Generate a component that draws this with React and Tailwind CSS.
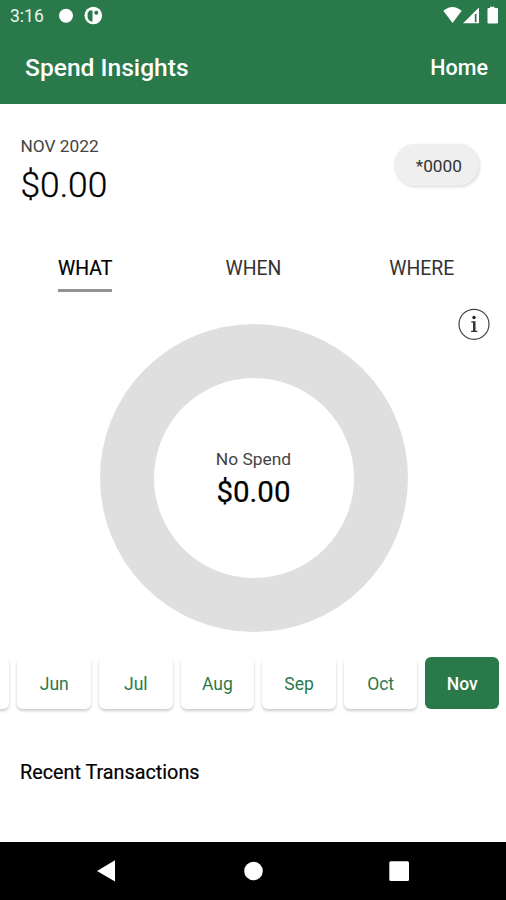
const months = ['', 'Jun', 'Jul', 'Aug', 'Sep', 'Oct', 'Nov'];

function StatusBar() {
  return (
    <div className="flex h-8 items-center justify-between bg-[#29794a] pl-[10px] pr-[7px]">
      <div className="flex items-center">
        <span className="w-[48px] text-[17.500px] leading-8 text-[#eaf5ec]">3:16</span>
        <svg width="46" height="20" viewBox="0 0 46 20">
          <circle cx="8" cy="9.7" r="7" fill="#fff" />
          <circle cx="35.3" cy="9.5" r="8.8" fill="#fff" />
          <path d="M31.500 4.500h3v11h-1.500q-3.500-1.500-3.500-5.500t2-5.500z" fill="#29794a" />
          <circle cx="38.300" cy="6.700" r="2" fill="#29794a" />
        </svg>
      </div>
      <svg width="56" height="20" viewBox="0 0 56 20" fill="#fff">
        <path d="M0.300 4.800Q9.500-3 18.700 4.800L9.500 17z" />
        <path fillRule="evenodd" d="M20 17.300 36 1.500V17.300zM31.800 8v8.300h1.700V8z" />
        <path d="M47 2V.8h4.500V2H54q1 0 1 1v13.500q0 1-1 1h-8.500q-1 0-1-1V3q0-1 1-1z" />
      </svg>
    </div>
  );
}

function Tab({ label, active }) {
  return (
    <div className="flex flex-1 justify-center">
      <span
        className={
          active
            ? 'h-[38px] border-b-[3px] border-[#929292] pt-px text-[19.400px] leading-[28px] text-black [-webkit-text-stroke:0.2px_#000]'
            : 'h-[38px] pt-px text-[19.400px] leading-[28px] text-[#333]'
        }
      >
        {label}
      </span>
    </div>
  );
}

export default function App() {
  return (
    <div className="flex h-[900px] w-[506px] flex-col overflow-hidden bg-white font-['Roboto',sans-serif] whitespace-nowrap">
      <StatusBar />
      <header className="flex h-[72px] items-center justify-between bg-[#29794a] pl-[25px] pr-[18px] font-medium text-white">
        <h1 className="text-[24.600px] leading-[72px]">Spend Insights</h1>
        <span className="text-[21.500px] leading-[72px]">Home</span>
      </header>

      <main className="flex h-[738px] flex-col">
        <section className="flex h-[150px] items-start justify-between pl-[20.500px] pr-[27px] pt-[30px]">
          <div className="flex flex-col">
            <span className="text-[17.300px] leading-[24px] text-[#444]">NOV 2022</span>
            <span className="mt-[6px] text-[35.300px] font-light leading-[42px] text-black [-webkit-text-stroke:0.3px_#000]">
              $0.00
            </span>
          </div>
          <div className="mt-[10px] flex h-[42px] w-[85px] items-center justify-end rounded-full bg-[#efefef] pr-[17px] pt-[3px] text-[17.300px] text-[#333] shadow-[1px_1px_3px_rgba(0,0,0,0.16)]">
            *0000
          </div>
        </section>

        <nav className="flex h-[38px] pl-px">
          <Tab label="WHAT" active />
          <Tab label="WHEN" />
          <Tab label="WHERE" />
        </nav>

        <div className="flex h-[32px] justify-end pr-[16px] pt-[16px]">
          <svg width="32" height="32" viewBox="0 0 32 32" className="shrink-0">
            <circle cx="16" cy="16.300" r="15" fill="none" stroke="#444" strokeWidth="1.200" />
            <circle cx="16" cy="9.500" r="1.700" fill="#222" />
            <path d="M13.300 13.300h4.200v9.500h1.800v1.300h-6.200v-1.300h1.900v-8.200h-1.700z" fill="#333" />
          </svg>
        </div>

        <section className="flex h-[308px] justify-center pl-px">
          <div className="flex h-[308px] w-[308px] items-center justify-center rounded-full border-[54px] border-[#dfdfdf] bg-white">
            <div className="flex flex-col items-center pt-[2px]">
              <span className="text-[17.400px] leading-[24px] text-[#444]">No Spend</span>
              <span className="mt-px text-[29.500px] leading-[40px] text-black [-webkit-text-stroke:0.2px_#000]">$0.00</span>
            </div>
          </div>
        </section>

        <section className="flex h-[90px] justify-end gap-[8px] overflow-hidden pr-[7px] pt-[25px]">
          {months.map((m) => (
            <div
              key={m}
              className={
                m === 'Nov'
                  ? 'flex h-[52px] w-[73.600px] shrink-0 items-center justify-center rounded-[6px] bg-[#29794a] pt-[2px] text-[17.500px] font-medium text-white'
                  : 'flex h-[52px] w-[73.600px] shrink-0 items-center justify-center rounded-[6px] bg-white pt-[2px] text-[17.500px] text-[#29794a] shadow-[0_2px_3px_rgba(0,0,0,0.2)]'
              }
            >
              {m}
            </div>
          ))}
        </section>

        <h2 className="pl-[20px] pt-[37px] text-[19.800px] leading-[28px] text-black [-webkit-text-stroke:0.2px_#000]">
          Recent Transactions
        </h2>
      </main>

      <footer className="flex h-[58px] bg-black">
        <svg width="506" height="58" viewBox="0 0 506 58" fill="#fff">
          <path d="M97 29 115 18.200V39.500z" />
          <circle cx="253.500" cy="29" r="9.300" />
          <rect x="389.300" y="19.200" width="19.700" height="19.700" rx="1.500" />
        </svg>
      </footer>
    </div>
  );
}
